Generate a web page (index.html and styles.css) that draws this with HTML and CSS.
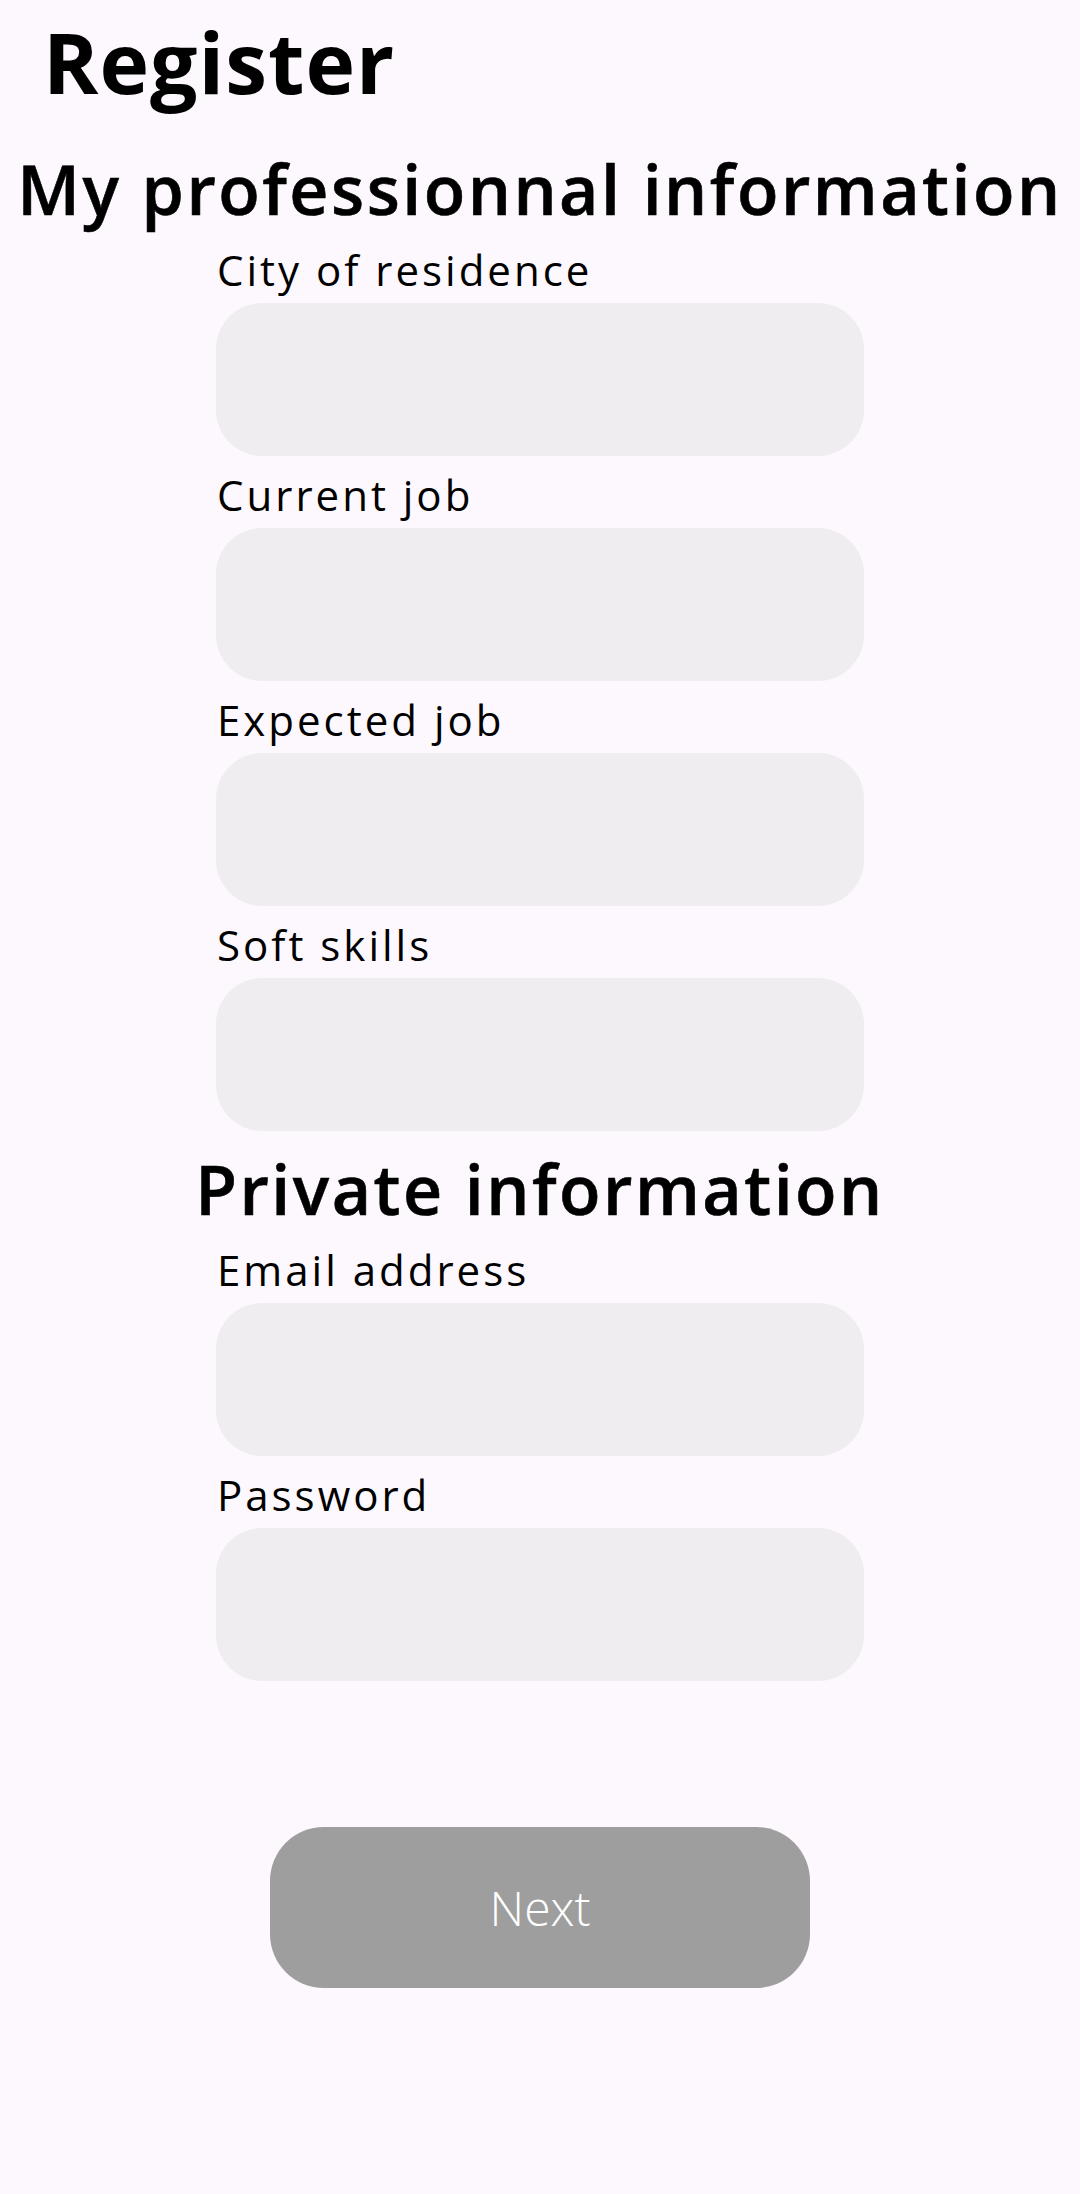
FILE: index.html
```html
<!DOCTYPE html>
<html lang="en">
<head>
<meta charset="utf-8">
<title>Register</title>
<link rel="stylesheet" href="styles.css">
</head>
<body>
<main class="screen">
  <h1 class="title">Register</h1>
  <h2 class="section section-first">My professionnal information</h2>
  <div class="group-list">
    <div class="group"><label class="label">City of residence</label><div class="input"></div></div>
    <div class="group"><label class="label">Current job</label><div class="input"></div></div>
    <div class="group"><label class="label">Expected job</label><div class="input"></div></div>
    <div class="group"><label class="label">Soft skills</label><div class="input"></div></div>
  </div>
  <h2 class="section section-private">Private information</h2>
  <div class="group-list">
    <div class="group"><label class="label">Email address</label><div class="input"></div></div>
    <div class="group"><label class="label">Password</label><div class="input"></div></div>
  </div>
  <div class="actions">
    <button class="next" type="button">Next</button>
  </div>
</main>
</body>
</html>
```

FILE: styles.css
```css
html, body {
  margin: 0;
  padding: 0;
  background: #fdf8fd;
}

.screen {
  width: 1080px;
  min-height: 2194px;
  padding-top: 20px;
  box-sizing: border-box;
  font-family: "Open Sans", "Noto Sans", sans-serif;
  color: #000;
  display: flex;
  flex-direction: column;
}

.title {
  margin: 0 0 0 43px;
  font-size: 84px;
  line-height: 84px;
  font-weight: 700;
  letter-spacing: 1px;
}

.section {
  margin: 0;
  font-size: 68px;
  line-height: 68px;
  font-weight: 600;
  letter-spacing: 2.5px;
  text-align: center;
  margin-bottom: 26px;
  -webkit-text-stroke: 0.6px #000;
}

.section-first {
  margin-top: 51px;
}

.section-private {
  margin-top: 24px;
}

.group-list {
  width: 648px;
  margin: 0 auto;
  display: flex;
  flex-direction: column;
  gap: 18px;
}

.group {
  display: flex;
  flex-direction: column;
}

.label {
  font-size: 42px;
  line-height: 42px;
  font-weight: 400;
  letter-spacing: 3px;
  margin-bottom: 12px;
  padding-left: 1px;
}

.input {
  height: 153px;
  background: #efedf0;
  border-radius: 46px;
}

.actions {
  display: flex;
  justify-content: center;
  margin-top: 146px;
}

.next {
  width: 540px;
  height: 161px;
  border: none;
  border-radius: 54px;
  background: #9e9e9e;
  color: #fff;
  font-family: "Open Sans", "Noto Sans", sans-serif;
  font-size: 48px;
  font-weight: 300;
  padding: 0;
}
```
